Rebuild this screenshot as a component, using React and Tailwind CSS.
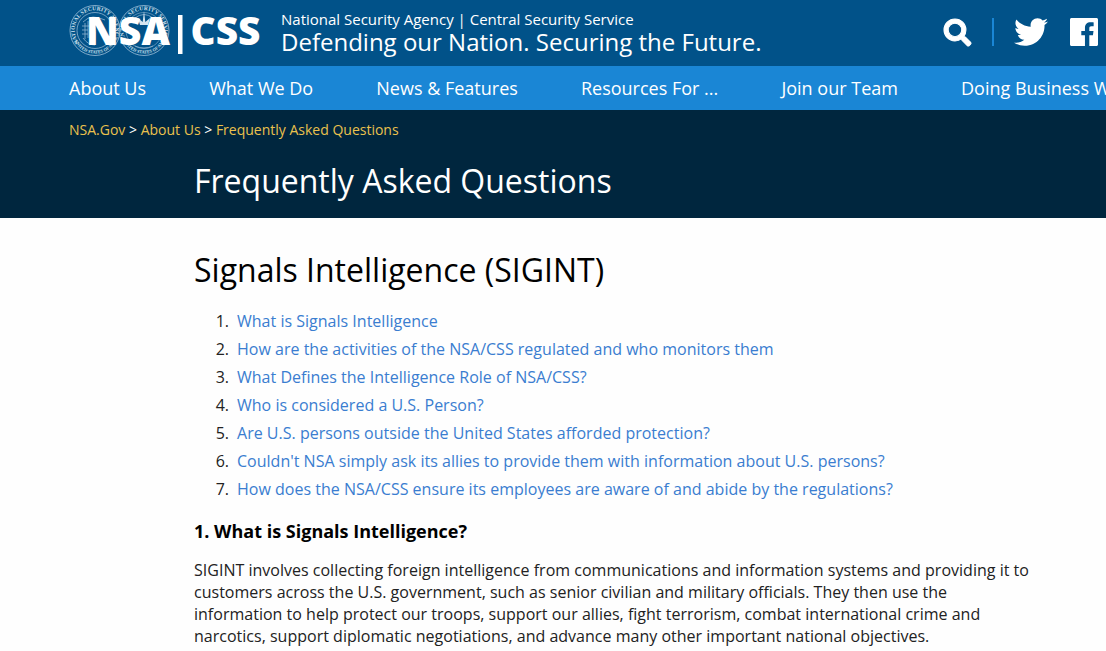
import { FaSearch, FaTwitter } from 'react-icons/fa';

const navItems = ['About Us', 'What We Do', 'News & Features', 'Resources For ...', 'Join our Team', 'Doing Business With Us'];

const questions = [
  'What is Signals Intelligence',
  'How are the activities of the NSA/CSS regulated and who monitors them',
  'What Defines the Intelligence Role of NSA/CSS?',
  'Who is considered a U.S. Person?',
  'Are U.S. persons outside the United States afforded protection?',
  "Couldn't NSA simply ask its allies to provide them with information about U.S. persons?",
  'How does the NSA/CSS ensure its employees are aware of and abide by the regulations?',
];

function Logo() {
  return (
    <svg width="194" height="56" viewBox="0 0 194 56" className="shrink-0">
      <defs>
        <path id="ringLeft" d="M10 43 A20.300 20.300 0 1 1 42 43" />
        <path id="ringLeftLow" d="M5 40 A23 23 0 0 0 47 40" />
        <path id="ringRight" d="M59 43 A20.300 20.300 0 1 1 91 43" />
        <path id="ringRightLow" d="M54 40 A23 23 0 0 0 96 40" />
      </defs>
      <g fill="none" stroke="#8fb4d0">
        <circle cx="26" cy="30.500" r="25" strokeWidth="0.900" />
        <circle cx="26" cy="30.500" r="18" strokeWidth="0.800" />
        <circle cx="75" cy="30.500" r="25" strokeWidth="0.900" />
        <circle cx="75" cy="30.500" r="18" strokeWidth="0.600" />
        <path d="M14 22 q5 -5 10 -5 t12 3 M13 26 h7 M13 30 h6 M13 34 h6 M14 38 q5 7 12 7 M16 23 v16 M19 21 v17" strokeWidth="0.800" />
        <path d="M66 18 q9 -7 18 0 M64 23 l5 -3 M86 23 l-5 -3 M66 46 q9 4 18 0" strokeWidth="0.800" />
      </g>
      <path d="M75 11 L76.300 22 L81 18 L79 25 H71 L69 18 L73.700 22 Z" fill="#d5e5f0" />
      <g fill="#d0e1ed" fontFamily="Liberation Serif, serif" fontSize="5.500" fontWeight="700">
        <text><textPath href="#ringLeft" textLength="86">NATIONAL SECURITY AGENCY</textPath></text>
        <text fontSize="4.500"><textPath href="#ringLeftLow" startOffset="1" textLength="50" lengthAdjust="spacingAndGlyphs">UNITED STATES OF AM.</textPath></text>
        <text><textPath href="#ringRight" textLength="86">CENTRAL SECURITY SERVICE</textPath></text>
        <text fontSize="4.500"><textPath href="#ringRightLow" startOffset="1" textLength="50" lengthAdjust="spacingAndGlyphs">UNITED STATES OF AM.</textPath></text>
      </g>
      <g fill="#fff" fontFamily="Open Sans, sans-serif" fontWeight="800" fontSize="38">
        <text x="17" y="45" textLength="84" lengthAdjust="spacingAndGlyphs">NSA</text>
        <text x="121.500" y="45" textLength="70" lengthAdjust="spacingAndGlyphs">CSS</text>
      </g>
      <rect x="109" y="15" width="4.500" height="39" fill="#fff" />
    </svg>
  );
}

function FacebookIcon() {
  return (
    <svg width="28" height="28" viewBox="0 0 24 24" fill="currentColor">
      <path d="M22.676 0H1.324C.593 0 0 .593 0 1.324v21.352C0 23.408.593 24 1.324 24h11.494v-9.294H9.689v-3.621h3.129V8.410c0-3.099 1.894-4.785 4.659-4.785 1.325 0 2.464.097 2.796.141v3.240h-1.921c-1.500 0-1.792.721-1.792 1.771v2.311h3.584l-.465 3.630H16.560V24h6.115c.733 0 1.325-.592 1.325-1.324V1.324C24 .593 23.408 0 22.676 0" />
    </svg>
  );
}

function Header() {
  return (
    <header className="h-[66px] bg-[#015289] text-white flex items-start pl-[69px] pr-2">
      <Logo />
      <div className="ml-[18px] pt-[9px] whitespace-nowrap">
        <p className="text-[15px] leading-[21px]">National Security Agency | Central Security Service</p>
        <p className="text-2xl leading-6">Defending our Nation. Securing the Future.</p>
      </div>
      <div className="ml-auto flex items-center h-16">
        <FaSearch size={27} stroke="currentColor" strokeWidth={20} className="overflow-visible" />
        <span className="w-0.5 h-7 bg-[#1a86d5] ml-[21px] mr-5" />
        <FaTwitter size={34} />
        <span className="ml-[22px]"><FacebookIcon /></span>
      </div>
    </header>
  );
}

export default function App() {
  return (
    <div className="h-[651px] overflow-hidden bg-[#fefefe] font-['Open_Sans',sans-serif] text-black">
      <Header />
      <nav className="h-11 bg-[#1a86d5] text-white text-lg flex items-center gap-[63.1px] pl-[69px] overflow-hidden">
        {navItems.map((item) => (
          <a key={item} href="#" className="whitespace-nowrap shrink-0">{item}</a>
        ))}
      </nav>

      <section className="h-[108px] bg-[#00263e] text-white pt-[9px]">
        <p className="pl-[69px] text-sm leading-[22px] text-[#eac14d]">
          <a href="#">NSA.Gov</a> <span className="text-white">&gt;</span> <a href="#">About Us</a> <span className="text-white">&gt;</span> <a href="#">Frequently Asked Questions</a>
        </p>
        <h1 className="pl-[194px] mt-[18px] text-[32px] leading-11">Frequently Asked Questions</h1>
      </section>

      <main className="pl-[194px] pt-[30px]">
        <h2 className="text-[32px] leading-11">Signals Intelligence (SIGINT)</h2>
        <ol className="mt-[15px] text-base">
          {questions.map((q, i) => (
            <li key={q} className="flex leading-7">
              <span className="w-[35px] text-right text-[#222]">{i + 1}.</span>
              <a href="#" className="ml-2 text-[#3a7dd0] tracking-[0.01px]">{q}</a>
            </li>
          ))}
        </ol>
        <h3 className="mt-[15px] text-lg leading-[26px] font-bold">1. What is Signals Intelligence?</h3>
        <p className="mt-[15px] w-[850px] text-base leading-[22px] text-[#222] tracking-[0.01px]">
          SIGINT involves collecting foreign intelligence from communications and information systems and providing it to<br />
          customers across the U.S. government, such as senior civilian and military officials. They then use the<br />
          information to help protect our troops, support our allies, fight terrorism, combat international crime and<br />
          narcotics, support diplomatic negotiations, and advance many other important national objectives.
        </p>
      </main>
    </div>
  );
}
